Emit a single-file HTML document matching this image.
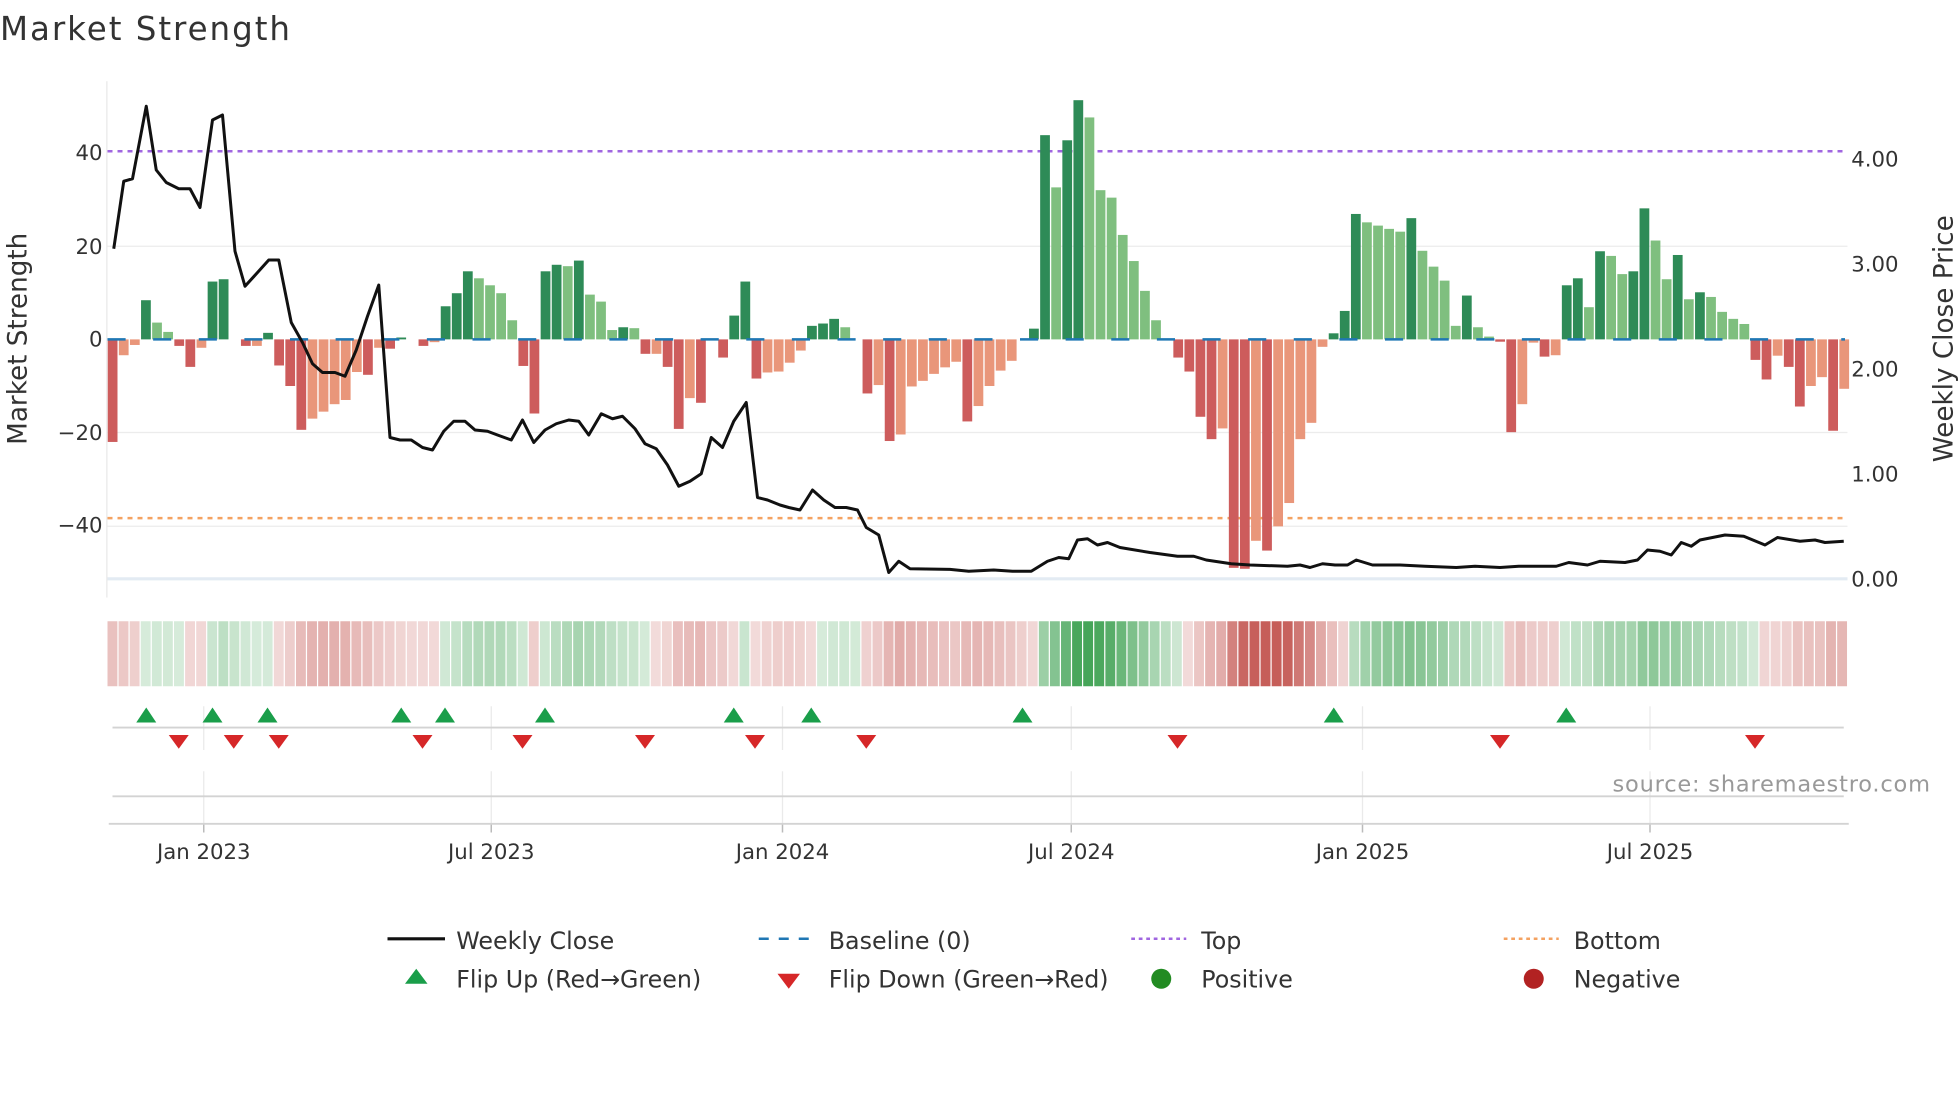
<!DOCTYPE html>
<html><head><meta charset="utf-8"><style>
html,body{margin:0;padding:0;background:#fff;width:1960px;height:1102px;overflow:hidden}
svg{display:block}
text{font-family:"DejaVu Sans","Liberation Sans",sans-serif;fill:#333}
</style></head><body>
<svg id="s" width="1960" height="1102" viewBox="0 0 1568 881.6" preserveAspectRatio="none" xmlns="http://www.w3.org/2000/svg">
<text x="0" y="32" font-size="26" textLength="232">Market Strength</text>
<g id="grid"></g>
<g id="bars"></g>
<g id="strip"></g>
<g id="marks"></g>
<text x="82" y="128" font-size="17" text-anchor="end">40</text>
<text x="82" y="203" font-size="17" text-anchor="end">20</text>
<text x="82" y="277" font-size="17" text-anchor="end">0</text>
<text x="82" y="352" font-size="17" text-anchor="end">−20</text>
<text x="82" y="426" font-size="17" text-anchor="end">−40</text>
<text x="1481" y="133" font-size="17">4.00</text>
<text x="1481" y="217" font-size="17">3.00</text>
<text x="1481" y="301" font-size="17">2.00</text>
<text x="1481" y="385" font-size="17">1.00</text>
<text x="1481" y="469" font-size="17">0.00</text>
<text transform="translate(21,271) rotate(-90)" font-size="21" text-anchor="middle">Market Strength</text>
<text transform="translate(1562,271) rotate(-90)" font-size="21" text-anchor="middle">Weekly Close Price</text>
<text x="163" y="687" font-size="17" text-anchor="middle">Jan 2023</text>
<text x="393" y="687" font-size="17" text-anchor="middle">Jul 2023</text>
<text x="626" y="687" font-size="17" text-anchor="middle">Jan 2024</text>
<text x="857" y="687" font-size="17" text-anchor="middle">Jul 2024</text>
<text x="1090" y="687" font-size="17" text-anchor="middle">Jan 2025</text>
<text x="1320" y="687" font-size="17" text-anchor="middle">Jul 2025</text>
<text x="1290" y="633" font-size="18" textLength="254" style="fill:#999">source: sharemaestro.com</text>
<!-- legend -->
<line x1="310" y1="751" x2="356" y2="751" stroke="#111" stroke-width="2.5"/>
<text x="365" y="759" font-size="19">Weekly Close</text>
<line x1="607" y1="751" x2="651" y2="751" stroke="#1f77b4" stroke-width="2" stroke-dasharray="8 8"/>
<text x="663" y="759" font-size="19">Baseline (0)</text>
<line x1="905" y1="751" x2="949" y2="751" stroke="#a066e0" stroke-width="2" stroke-dasharray="3 3"/>
<text x="961" y="759" font-size="19">Top</text>
<line x1="1203" y1="751" x2="1247" y2="751" stroke="#f4a261" stroke-width="2" stroke-dasharray="3 3"/>
<text x="1259" y="759" font-size="19">Bottom</text>
<polygon points="333,775 324,787 342,787" fill="#1a9e4a"/>
<text x="365" y="790" font-size="19">Flip Up (Red→Green)</text>
<polygon points="622,779 640,779 631,791" fill="#d62728"/>
<text x="663" y="790" font-size="19">Flip Down (Green→Red)</text>
<circle cx="929" cy="783" r="8" fill="#228b22"/>
<text x="961" y="790" font-size="19">Positive</text>
<circle cx="1227" cy="783" r="8" fill="#b22222"/>
<text x="1259" y="790" font-size="19">Negative</text>
</svg>
<script>
var NS="http://www.w3.org/2000/svg";
function el(p,t,a){var e=document.createElementNS(NS,t);for(var k in a)e.setAttribute(k,a[k]);document.getElementById(p).appendChild(e);return e;}
var v=[-22,-3.4,-1.2,8.4,3.6,1.6,-1.4,-5.9,-1.8,12.4,12.9,0,-1.4,-1.4,1.4,-5.6,-10,-19.4,-17,-15.5,-13.9,-13,-7,-7.6,-1.8,-2,0.4,0,-1.4,-0.6,7.1,9.9,14.6,13.1,11.6,9.9,4.1,-5.7,-15.9,14.6,
16,15.7,16.9,9.6,8.1,2,2.6,2.4,-3.1,-3.1,-5.9,-19.2,-12.6,-13.6,0,-3.9,5.1,12.4,-8.4,-7.1,-6.9,-5,-2.4,2.9,3.4,4.4,2.6,0,-11.6,-9.8,-21.8,-20.4,-10.1,-8.9,-7.4,-6,-4.8,-17.6,-14.3,-10,
-6.7,-4.6,0,2.3,43.8,32.6,42.7,51.3,47.6,32,30.4,22.4,16.8,10.4,4.1,0,-3.9,-6.9,-16.6,-21.4,-19.1,-49,-49.2,-43.2,-45.3,-40.1,-35.1,-21.4,-17.9,-1.6,1.3,6.1,26.9,25.1,24.4,23.7,23.1,26,19,15.6,
12.6,2.9,9.4,2.6,0.6,-0.5,-19.9,-13.9,-0.7,-3.7,-3.4,11.6,13.1,6.9,18.9,17.9,14,14.6,28.1,21.2,12.9,18.1,8.6,10.1,9.1,5.9,4.4,3.3,-4.4,-8.6,-3.5,-5.9,-14.4,-10,-8.1,-19.6,-10.6];
var x0=90.1,dx=8.88,z=271.5,k=3.73;
[197,346,421].forEach(function(y){el("grid","line",{x1:86,x2:1478,y1:y,y2:y,stroke:"#ececec","stroke-width":1});});
el("grid","line",{x1:86,x2:1478,y1:463,y2:463,stroke:"#e3ebf3","stroke-width":2.5});
el("grid","line",{x1:85.5,x2:85.5,y1:65,y2:478,stroke:"#e8e8e8","stroke-width":1});
el("grid","line",{x1:86,x2:1476,y1:121,y2:121,stroke:"#a066e0","stroke-width":2,"stroke-dasharray":"4 4"});
el("grid","line",{x1:86,x2:1476,y1:414.5,y2:414.5,stroke:"#f4a261","stroke-width":2,"stroke-dasharray":"4 4"});
for(var i=0;i<v.length;i++){
 var x=x0+i*dx, val=v[i], prev=i?v[i-1]:0, c;
 if(val>=0) c=(val>prev)?"#2e8b57":"#7fbf7f"; else c=(val<prev)?"#cd5c5c":"#e9967a";
 var h=Math.abs(val)*k, y=val>=0?z-h:z;
 if(h>0.3) el("bars","rect",{x:x-3.9,y:y,width:7.8,height:h,fill:c});
}
el("bars","line",{x1:86,x2:1476,y1:z,y2:z,stroke:"#1f77b4","stroke-width":2,"stroke-dasharray":"14.5 22"});
var pts="91,199 99,145 106,143 117,85 125,136 133,146 143,151 152,151 160,166 170,96 178,92 188,201 196,229 206,218 215,208 223,208 233,258 242,274 250,291 258,298 268,298 276,301 285,280 294,253 303,228 312,350 320,352 329,352 338,358 346,360 355,345 363,337 372,337 380,344 390,345 398,348 409,352 418,336 427,354 436,344 445,339 455,336 463,337 471,348 481,331 490,335 498,333 508,343 516,355 525,359 534,372 543,389 552,385 561,379 569,350 578,358 587,337 597,322 606,398 614,400 624,404 631,406 640,408 650,392 659,400 668,406 677,406 686,408 693,422 703,428 711,458 719,449 728,455 760,455.5 775,457 795,456 810,457 825,457 838,449 847,446 855,447 862,432 870,431 878,436 886,434 896,438 920,442 942,445 955,445 965,448 985,451 1000,452 1030,453 1040,452 1048,454 1058,451 1068,452 1078,452 1085,448 1098,452 1120,452 1140,453 1165,454 1180,453 1200,454 1215,453 1245,453 1255,450 1270,452 1280,449 1300,450 1310,448 1318,440 1328,441 1337,444 1345,434 1353,437 1360,432 1380,428 1395,429 1412,436 1422,430 1440,433 1452,432 1460,434 1475,433";
el("bars","polyline",{points:pts,fill:"none",stroke:"#111","stroke-width":2.4,"stroke-linejoin":"round"});
var sm=0;
for(var i=0;i<v.length;i++){
 sm=sm*0.6+v[i]*0.4;
 var s=Math.max(-1,Math.min(1,sm/40)), a=0.2+0.75*Math.abs(s);
 var base=s>=0?[60,160,80]:[195,85,80];
 var col="rgb("+base.map(function(b){return Math.round(255-(255-b)*a);}).join(",")+")";
 el("strip","rect",{x:86+i*8.87,y:497,width:7.9,height:52,fill:col});
}
[163,393,626,857,1090,1320].forEach(function(x){
 el("marks","line",{x1:x,x2:x,y1:565,y2:600,stroke:"#eaeaea","stroke-width":1});
 el("marks","line",{x1:x,x2:x,y1:617,y2:659,stroke:"#eaeaea","stroke-width":1});
 el("marks","line",{x1:x,x2:x,y1:659,y2:666,stroke:"#bbb","stroke-width":1.2});
});
el("marks","line",{x1:90,x2:1475,y1:582,y2:582,stroke:"#d3d3d3","stroke-width":1.5});
el("marks","line",{x1:90,x2:1475,y1:637,y2:637,stroke:"#d3d3d3","stroke-width":1.5});
el("marks","line",{x1:87,x2:1479,y1:659,y2:659,stroke:"#d3d3d3","stroke-width":1.5});
[117,170,214,321,356,436,587,649,818,1067,1253].forEach(function(x){el("marks","polygon",{points:(x)+",566 "+(x-8)+",578 "+(x+8)+",578",fill:"#1a9e4a"});});
[143,187,223,338,418,516,604,693,942,1200,1404].forEach(function(x){el("marks","polygon",{points:(x-8)+",588 "+(x+8)+",588 "+x+",599",fill:"#d62728"});});
</script>
</body></html>
